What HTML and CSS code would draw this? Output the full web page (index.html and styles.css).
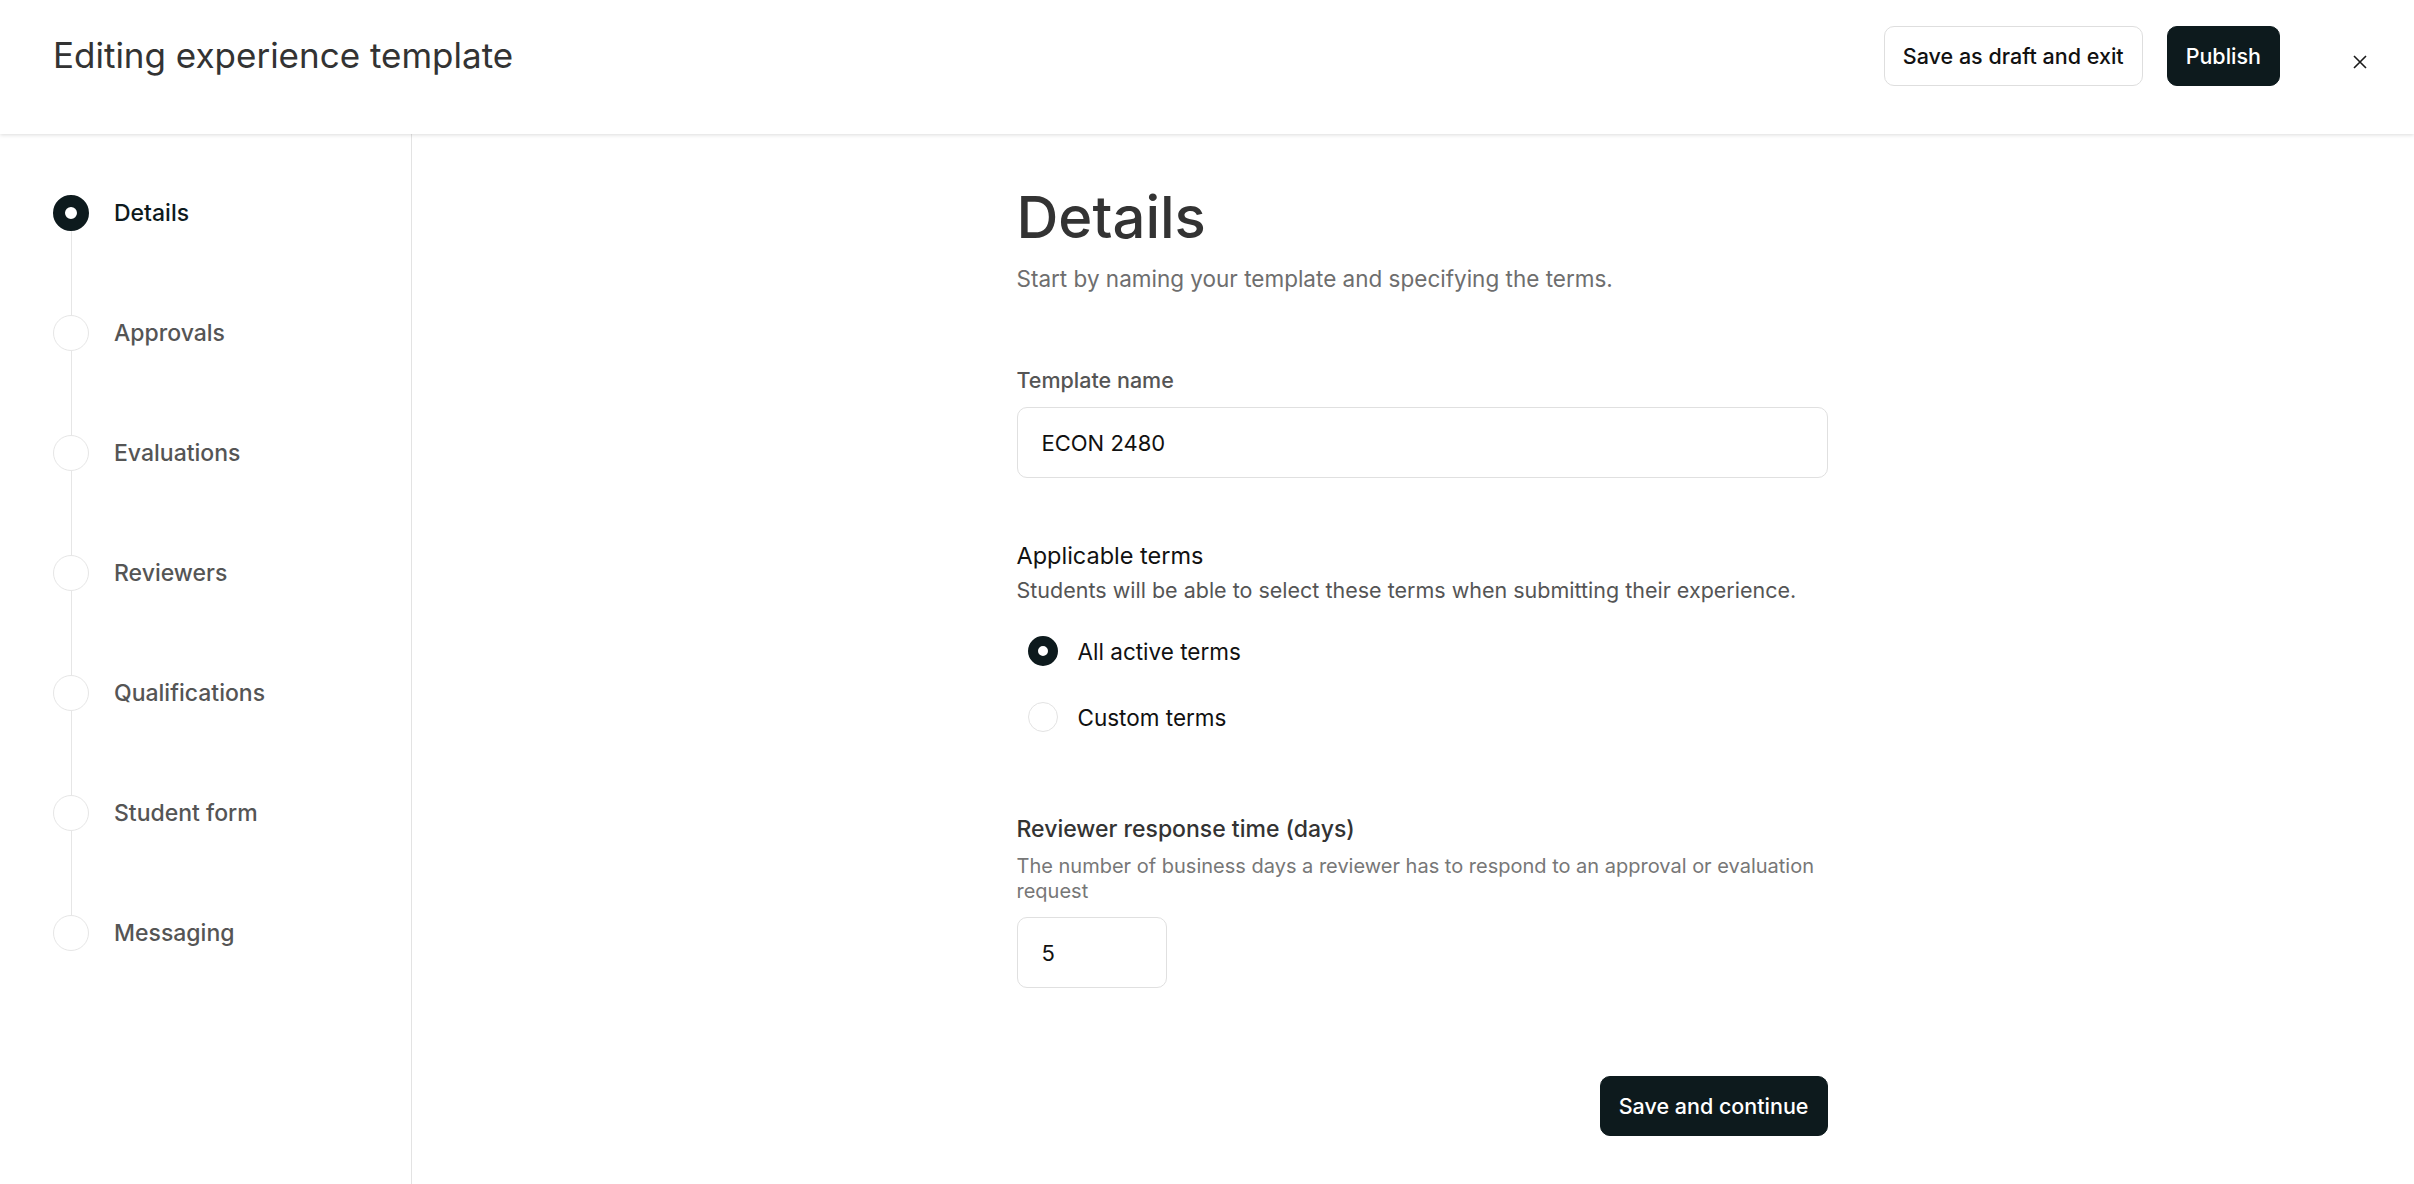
FILE: index.html
```html
<!DOCTYPE html>
<html lang="en">
<head>
  <meta charset="UTF-8">
  <title>Editing experience template</title>
  <link rel="stylesheet" href="styles.css">
</head>
<body>

  <header class="topbar">
    <h1 class="topbar-title">Editing experience template</h1>
    <div class="topbar-actions">
      <button type="button" class="btn btn-outline">Save as draft and exit</button>
      <button type="button" class="btn btn-dark">Publish</button>
      <button type="button" class="close-btn" aria-label="Close">
        <svg width="14" height="14" viewBox="0 0 14 14">
          <path d="M1 1 L13 13 M13 1 L1 13" stroke="#1a1a1a" stroke-width="1.6" fill="none"/>
        </svg>
      </button>
    </div>
  </header>

  <div class="layout">
    <nav class="steps">
      <div class="step active">
        <div class="step-track"><span class="dot"></span><span class="line"></span></div>
        <span class="step-label">Details</span>
      </div>
      <div class="step">
        <div class="step-track"><span class="dot"></span><span class="line"></span></div>
        <span class="step-label">Approvals</span>
      </div>
      <div class="step">
        <div class="step-track"><span class="dot"></span><span class="line"></span></div>
        <span class="step-label">Evaluations</span>
      </div>
      <div class="step">
        <div class="step-track"><span class="dot"></span><span class="line"></span></div>
        <span class="step-label">Reviewers</span>
      </div>
      <div class="step">
        <div class="step-track"><span class="dot"></span><span class="line"></span></div>
        <span class="step-label">Qualifications</span>
      </div>
      <div class="step">
        <div class="step-track"><span class="dot"></span><span class="line"></span></div>
        <span class="step-label">Student form</span>
      </div>
      <div class="step last">
        <div class="step-track"><span class="dot"></span></div>
        <span class="step-label">Messaging</span>
      </div>
    </nav>

    <main class="content">
      <form class="details-form">
        <h2 class="page-title">Details</h2>
        <p class="page-sub">Start by naming your template and specifying the terms.</p>

        <div class="field field-name">
          <label for="templateName" class="field-label">Template name</label>
          <input type="text" id="templateName" class="text-input" value="ECON 2480">
        </div>

        <div class="field field-terms">
          <div class="group-title">Applicable terms</div>
          <div class="group-desc">Students will be able to select these terms when submitting their experience.</div>
          <div class="radio-list">
            <label class="radio-row"><input type="radio" name="terms" checked><span class="radio"></span> All active terms</label>
            <label class="radio-row"><input type="radio" name="terms"><span class="radio"></span> Custom terms</label>
          </div>
        </div>

        <div class="field field-days">
          <label for="days" class="field-label">Reviewer response time (days)</label>
          <div class="field-help">The number of business days a reviewer has to respond to an approval or evaluation request</div>
          <input type="text" id="days" class="text-input small" value="5">
        </div>

        <div class="form-footer">
          <button type="submit" class="btn btn-dark">Save and continue</button>
        </div>
      </form>
    </main>
  </div>

</body>
</html>
```

FILE: styles.css
```css
body {
  margin: 0;
  font-family: Inter, "Liberation Sans", Arial, sans-serif;
  color: #111;
  background: #fff;
}

/* top bar */
.topbar {
  display: flex;
  align-items: center;
  justify-content: space-between;
  height: 134px;
  box-sizing: border-box;
  padding: 0 32px 22px 53px;
  box-shadow: 0 1px 4px rgba(0, 0, 0, 0.14);
  position: relative;
  z-index: 1;
}

.topbar-title {
  margin: 0 0 2px;
  font-size: 35px;
  font-weight: 400;
  color: #333;
}

.topbar-actions {
  display: flex;
  align-items: center;
  gap: 24px;
}

.btn {
  font-family: inherit;
  height: 60px;
  padding: 0 18px;
  font-size: 21.5px;
  font-weight: 500;
  border-radius: 10px;
  cursor: pointer;
}

.btn-outline {
  background: #fff;
  border: 1px solid #dedede;
  color: #111;
}

.btn-dark {
  background: #0d1a1d;
  border: 1px solid #0d1a1d;
  color: #fff;
}

.close-btn {
  width: 44px;
  height: 44px;
  margin: 12px 0 0 34px;
  padding: 0;
  border: none;
  background: none;
  display: flex;
  align-items: center;
  justify-content: center;
  cursor: pointer;
}

/* page body */
.layout {
  display: flex;
  min-height: calc(100vh - 134px);
}

.steps {
  flex-shrink: 0;
  width: 358px;
  padding: 61px 0 0 53px;
  border-right: 1px solid #e3e3e3;
}

.step {
  display: flex;
  gap: 25px;
  height: 120px;
}

.step.last {
  height: 36px;
}

.step-track {
  display: flex;
  flex-direction: column;
  align-items: center;
  width: 36px;
}

.dot {
  width: 36px;
  height: 36px;
  box-sizing: border-box;
  border-radius: 50%;
  border: 1px solid #e6e6e6;
  background: #fff;
  flex-shrink: 0;
}

.step.active .dot {
  border: 12px solid #0d1a1d;
}

.line {
  flex: 1;
  width: 1px;
  background: #e6e6e6;
}

.step-label {
  font-size: 23px;
  font-weight: 500;
  color: #555;
  line-height: 36px;
}

.step.active .step-label {
  color: #0d1a1d;
}

/* form */
.content {
  flex: 1;
  display: flex;
  justify-content: center;
  padding: 48px 0 40px 18px;
}

.details-form {
  width: 811px;
}

.page-title {
  margin: 0;
  font-size: 58px;
  font-weight: 500;
  line-height: 70px;
  color: #333;
}

.page-sub {
  margin: 12px 0 0;
  font-size: 22.5px;
  line-height: 30px;
  color: #6e6e6e;
}

.field-name {
  margin-top: 72px;
}

.field-label {
  display: block;
  font-size: 21.5px;
  font-weight: 500;
  line-height: 28px;
  color: #555;
}

.text-input {
  display: block;
  box-sizing: border-box;
  width: 100%;
  height: 71px;
  margin-top: 13px;
  padding: 0 24px;
  font-family: inherit;
  font-size: 22px;
  color: #111;
  border: 1px solid #e0e0e0;
  border-radius: 10px;
  outline: none;
}

.text-input.small {
  width: 150px;
}

.field-terms {
  margin-top: 63px;
}

.group-title {
  font-size: 23.5px;
  line-height: 30px;
  color: #111;
}

.group-desc {
  margin-top: 5px;
  font-size: 21.5px;
  line-height: 28px;
  color: #555;
}

.radio-list {
  display: flex;
  flex-direction: column;
  gap: 22px;
  margin-top: 25px;
  padding-left: 11px;
}

.radio-row {
  display: flex;
  align-items: center;
  gap: 20px;
  height: 44px;
  font-size: 22.5px;
  color: #111;
  cursor: pointer;
}

.radio-row input {
  display: none;
}

.radio {
  width: 30px;
  height: 30px;
  box-sizing: border-box;
  border-radius: 50%;
  border: 1px solid #e3e3e3;
}

.radio-row input:checked + .radio {
  border: 10px solid #0d1a1d;
}

.field-days {
  margin-top: 75px;
}

.field-days .field-label {
  font-size: 23px;
  line-height: 30px;
  color: #333;
}

.field-help {
  margin-top: 10px;
  font-size: 20px;
  line-height: 25px;
  color: #777;
}

.form-footer {
  display: flex;
  justify-content: flex-end;
  margin-top: 88px;
}
```
